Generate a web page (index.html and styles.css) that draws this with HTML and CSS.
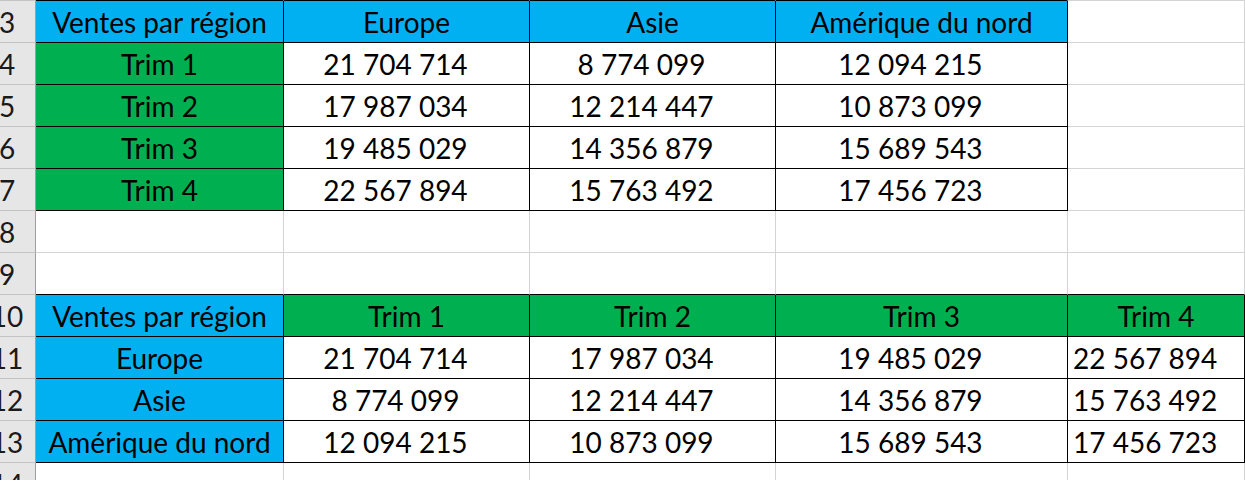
FILE: index.html
```html
<!DOCTYPE html>
<html lang="fr">
<head>
<meta charset="utf-8">
<link rel="stylesheet" href="styles.css">
</head>
<body>
<div class="sheet">
  <div class="rh"></div><div class="c tt"></div><div class="c tt"></div><div class="c tt"></div><div class="c tt"></div><div class="c"></div>

  <div class="rh">3</div><div class="c t blue">Ventes par région</div><div class="c t blue">Europe</div><div class="c t blue">Asie</div><div class="c t blue">Amérique du nord</div><div class="c"></div>

  <div class="rh">4</div><div class="c t green">Trim 1</div><div class="c t num">21 704 714</div><div class="c t num">8 774 099</div><div class="c t num">12 094 215</div><div class="c"></div>
  <div class="rh">5</div><div class="c t green">Trim 2</div><div class="c t num">17 987 034</div><div class="c t num">12 214 447</div><div class="c t num">10 873 099</div><div class="c"></div>
  <div class="rh">6</div><div class="c t green">Trim 3</div><div class="c t num">19 485 029</div><div class="c t num">14 356 879</div><div class="c t num">15 689 543</div><div class="c"></div>
  <div class="rh">7</div><div class="c t green">Trim 4</div><div class="c t num">22 567 894</div><div class="c t num">15 763 492</div><div class="c t num">17 456 723</div><div class="c"></div>

  <div class="rh">8</div><div class="c"></div><div class="c"></div><div class="c"></div><div class="c"></div><div class="c"></div>
  <div class="rh">9</div><div class="c tt"></div><div class="c tt"></div><div class="c tt"></div><div class="c tt"></div><div class="c tt"></div>

  <div class="rh">10</div><div class="c t blue">Ventes par région</div><div class="c t green">Trim 1</div><div class="c t green">Trim 2</div><div class="c t green">Trim 3</div><div class="c t green">Trim 4</div>
  <div class="rh">11</div><div class="c t blue">Europe</div><div class="c t num">21 704 714</div><div class="c t num">17 987 034</div><div class="c t num">19 485 029</div><div class="c t left">22 567 894</div>
  <div class="rh">12</div><div class="c t blue">Asie</div><div class="c t num">8 774 099</div><div class="c t num">12 214 447</div><div class="c t num">14 356 879</div><div class="c t left">15 763 492</div>
  <div class="rh">13</div><div class="c t blue">Amérique du nord</div><div class="c t num">12 094 215</div><div class="c t num">10 873 099</div><div class="c t num">15 689 543</div><div class="c t left">17 456 723</div>

  <div class="rh">14</div><div class="c"></div><div class="c"></div><div class="c"></div><div class="c"></div><div class="c"></div>
</div>
</body>
</html>
```

FILE: styles.css
```css
html, body {
  margin: 0;
  padding: 0;
  background: #ffffff;
  overflow: hidden;
}

body {
  width: 1245px;
  height: 480px;
  font-family: Lato, "Liberation Sans", sans-serif;
  font-size: 28px;
  color: #000000;
}

.sheet {
  display: grid;
  grid-template-columns: 57px 248px 246px 246px 292px 177px;
  grid-auto-rows: 42px;
  margin: -41px 0 0 -21px;
}

.rh {
  box-sizing: border-box;
  background: #e6e6e6;
  border-right: 1px solid #9e9e9e;
  border-bottom: 1px solid #c4c4c4;
  display: flex;
  align-items: center;
  justify-content: center;
  color: #1a1a1a;
}

.c {
  box-sizing: border-box;
  border-right: 1px solid #d4d4d4;
  border-bottom: 1px solid #d4d4d4;
  display: flex;
  align-items: center;
  justify-content: center;
  white-space: nowrap;
  overflow: hidden;
}

.t {
  border-right-color: #000000;
  border-bottom-color: #000000;
}

.tt {
  border-bottom-color: #000000;
}

.blue {
  background: #00b0f0;
}

.green {
  background: #00b050;
}

.num {
  padding-right: 22px;
}

.left {
  justify-content: flex-start;
  padding-left: 5px;
}
```
